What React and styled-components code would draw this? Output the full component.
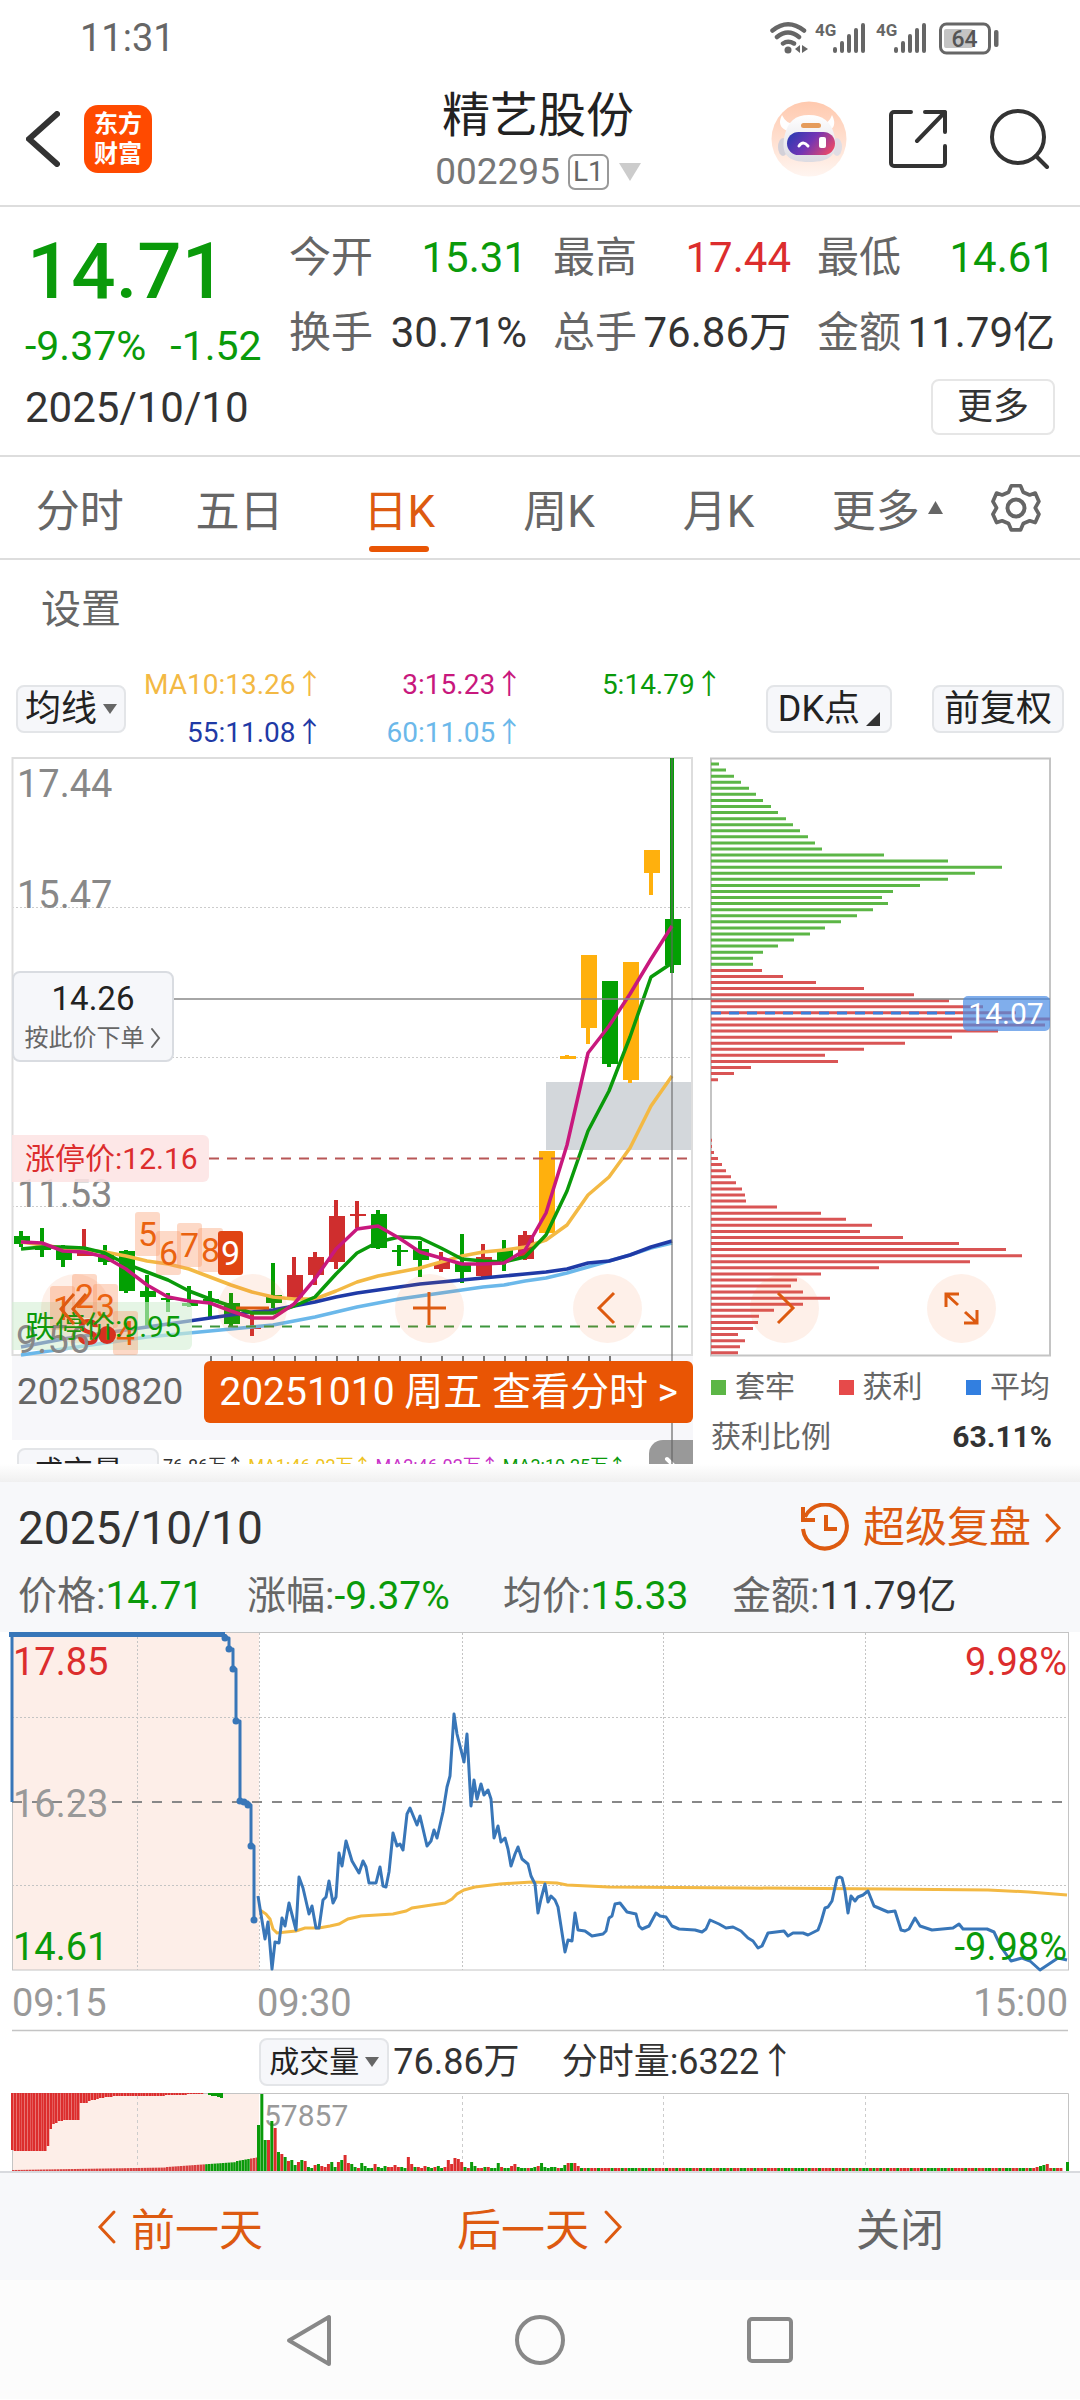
import React, { useState } from "react";

import styled, { createGlobalStyle } from "styled-components";

const GREEN = "#0a9a0a";
const RED = "#dc2d2d";
const ORANGE = "#dd5a10";
const AMBER = "#f3b944";
const MAGENTA = "#c8187d";
const BLUE = "#1f3aa6";
const SKY = "#6bb8ea";

const GlobalStyle = createGlobalStyle`
	* {
		box-sizing: border-box;
	}

	body {
		margin: 0;
		background: #fff;
		color: #333;
		font-family: Roboto, "Noto Sans CJK SC", sans-serif;
		font-size: 38px;
	}

	button {
		margin: 0;
		padding: 0;
		border: 0;
		background: none;
		color: inherit;
		font: inherit;
		cursor: pointer;
	}

	svg {
		display: block;
	}

	h1, h2, p, dl, dt, dd {
		margin: 0;
		font-weight: 400;
	}
`;

/* ---------- status bar ---------- */

const StatusBar = styled.div`
	display: flex;
	align-items: center;
	justify-content: space-between;
	height: 75px;
	padding: 0 80px;
	color: #666;
`;

const SignalBars = ({ x }) => (
	<g stroke="#666" strokeWidth="4" strokeLinecap="round">
		<path d={`M${x} 47v2M${x + 7} 41v8M${x + 14} 34v15M${x + 21} 28v21M${x + 28} 23v26`} />
	</g>
);

const StatusIcons = () => (
	<svg width="232" height="40" viewBox="768 16 232 40" fill="none" fontFamily="Roboto, sans-serif">
		<g stroke="#666" strokeWidth="4.5" strokeLinecap="round">
			<path d="M772.500 28.500Q788 16 804 28.500M777 35Q788 26 799 35M783 41.500Q788 38 794 41.500" />
		</g>
		<circle cx="788" cy="48" r="3.500" fill="#666" />
		<path d="M795 47l5-4v8zM802 43l6 4-6 4z" fill="#666" />
		<text x="815" y="34" fontSize="17" fontWeight="700" fill="#666">4G</text>
		<SignalBars x={835} />
		<text x="876" y="34" fontSize="17" fontWeight="700" fill="#666">4G</text>
		<SignalBars x={896} />
		<rect x="940.500" y="22" width="49" height="29" rx="6" stroke="#666" strokeWidth="3" />
		<rect x="944" y="27" width="29" height="19" rx="2" fill="#c4c4c4" />
		<rect x="994" y="28" width="4.500" height="17" rx="2" fill="#666" />
		<text x="964.500" y="45" textAnchor="middle" fontSize="23" fontWeight="500" fill="#555">64</text>
	</svg>
);

/* ---------- header ---------- */

const Header = styled.header`
	display: grid;
	grid-template-columns: 1fr auto 1fr;
	align-items: center;
	height: 132px;
	padding: 0 30px 0 26px;
	border-bottom: 2px solid #ddd;
`;

const HeaderSide = styled.div`
	display: flex;
	align-items: center;
	justify-content: ${p => (p.$end ? "flex-end" : "flex-start")};
	gap: ${p => (p.$end ? "42px" : "24px")};
	padding-bottom: 2px;
`;

const Logo = styled.div`
	width: 68px;
	height: 68px;
	padding-top: 4px;
	border-radius: 14px;
	background: #ff4a00;
	color: #fff;
	font-size: 24px;
	font-weight: 700;
	line-height: 30px;
	text-align: center;
`;

const Title = styled.h1`
	color: #222;
	font-size: 48px;
	line-height: 64px;
	text-align: center;
`;

const CodeRow = styled.div`
	display: flex;
	align-items: center;
	gap: 8px;
	color: #777;
	font-size: 37px;
	line-height: 48px;
`;

const Level = styled.span`
	margin-right: 2px;
	padding: 0 3px;
	border: 2px solid #999;
	border-radius: 7px;
	color: #666;
	font-size: 28px;
	line-height: 32px;
`;

const Triangle = styled.i`
	width: 0;
	height: 0;
	border: ${p => p.$size}px solid transparent;
	border-top: ${p => p.$size * 2 - 4}px solid ${p => p.$color};
	border-bottom: 0;
`;

const Robot = () => (
	<svg width="76" height="76" viewBox="0 0 76 76">
		<defs>
			<linearGradient id="halo" x1="0" y1="0" x2="0" y2="1">
				<stop offset="0" stopColor="#ffc9ae" />
				<stop offset="1" stopColor="#fff5f0" />
			</linearGradient>
			<linearGradient id="visor" x1="0" y1="0.2" x2="1" y2="0.6">
				<stop offset="0" stopColor="#2c3bb2" />
				<stop offset="0.5" stopColor="#7335b4" />
				<stop offset="1" stopColor="#e4486c" />
			</linearGradient>
			<linearGradient id="shell" x1="0" y1="0" x2="0" y2="1">
				<stop offset="0" stopColor="#fff" />
				<stop offset="1" stopColor="#dcdbe2" />
			</linearGradient>
		</defs>
		<circle cx="38" cy="38" r="37.500" fill="url(#halo)" />
		<ellipse cx="12" cy="46" rx="5" ry="9" fill="#d3d0d8" />
		<ellipse cx="66" cy="46" rx="5" ry="9" fill="#e0dde4" />
		<path d="M11 14q-6 12 6 16l7-7q-9 0-13-9zM61 14q6 12-4 16l-7-7q8 0 11-9z" fill="#fff" />
		<path d="M38 14c14 0 22 7 25 19 5 20-3 28-25 28s-29-8-24-28c3-12 10-19 24-19z" fill="url(#shell)" />
		<rect x="30" y="22" width="20" height="5" rx="2.500" fill="#e59c5c" />
		<rect x="16" y="31" width="48" height="23" rx="11.500" fill="url(#visor)" />
		<path d="M28 45q4-6 9 0" fill="none" stroke="#fff" strokeWidth="3" strokeLinecap="round" />
		<rect x="48" y="36" width="7" height="11" rx="2" fill="#fff" />
	</svg>
);

const Chevron = ({ dir = "right", w, h, stroke = 3 }) => (
	<svg width={w} height={h} viewBox={`0 0 ${w} ${h}`} fill="none" stroke="currentColor" strokeWidth={stroke} strokeLinecap="round">
		<path d={dir === "left" ? `M${w - 3} 3L3 ${h / 2}L${w - 3} ${h - 3}` : `M3 3L${w - 3} ${h / 2}L3 ${h - 3}`} />
	</svg>
);

/* ---------- quote summary ---------- */

const Quote = styled.section`
	display: grid;
	grid-template-columns: 264px 1fr;
	padding: 13px 25px 19px;
	border-bottom: 2px solid #ddd;
`;

const Latest = styled.div`
	padding-top: 10px;
`;

const BigPrice = styled.p`
	color: ${GREEN};
	font-size: 78px;
	font-weight: 500;
	line-height: 84px;
	padding-left: 2px;
`;

const Change = styled.p`
	display: flex;
	gap: 24px;
	color: ${GREEN};
	font-size: 41px;
	line-height: 64px;
`;

const Figures = styled.dl`
	display: grid;
	grid-template-columns: repeat(3, 1fr);
	align-content: start;
	column-gap: 26px;
`;

const Figure = styled.div`
	display: flex;
	justify-content: space-between;
	color: ${p => p.$color || "#333"};
	font-size: 42px;
	line-height: 75px;
	white-space: nowrap;

	& dt {
		color: #666;
	}
`;

const QuoteFoot = styled.div`
	grid-column: 1 / -1;
	display: flex;
	align-items: center;
	justify-content: space-between;
	height: 58px;
	color: #333;
	font-size: 42px;
`;

const MoreButton = styled.button`
	height: 56px;
	padding: 0 24px;
	border: 2px solid #e6e6e6;
	border-radius: 8px;
	font-size: 36px;
	line-height: 48px;
`;

/* ---------- period tabs ---------- */

const Tabs = styled.nav`
	display: flex;
	height: 103px;
	padding-right: 24px;
	border-bottom: 2px solid #ddd;
`;

const Tab = styled.button`
	position: relative;
	display: flex;
	flex: ${p => p.$grow || 160} 1 0;
	align-items: center;
	justify-content: center;
	gap: 8px;
	color: ${p => (p.$active ? ORANGE : "#666")};
	font-size: 44px;

	&::after {
		content: "";
		position: absolute;
		bottom: 6px;
		left: 50%;
		width: 60px;
		height: 6px;
		margin-left: -30px;
		border-radius: 3px;
		background: ${p => (p.$active ? "#e95504" : "transparent")};
	}
`;

const SettingsRow = styled.div`
	height: 100px;
	padding-left: 41px;
	color: #666;
	font-size: 40px;
	line-height: 100px;
`;

/* ---------- moving average row ---------- */

const AverageRow = styled.div`
	display: flex;
	align-items: center;
	height: 97px;
	padding: 0 16px;
`;

const Chip = styled.button`
	display: flex;
	flex-shrink: 0;
	align-items: center;
	gap: 6px;
	height: 48px;
	padding: 0 ${p => p.$pad || 10}px;
	border: 2px solid #e3e5e8;
	border-radius: 8px;
	background: #f6f7fa;
	color: #222;
	font-size: ${p => p.$size || 36}px;
	line-height: 42px;
	white-space: nowrap;
`;

const Averages = styled.div`
	display: grid;
	grid-template-columns: 198fr 200fr 200fr;
	flex: 598 1 0;
	font-size: 28px;
	line-height: 48px;
	text-align: right;
`;

const Average = styled.span`
	color: ${p => p.$color};
`;

const ChipGroup = styled.div`
	display: flex;
	flex: 342 1 0;
	justify-content: flex-end;
	gap: 40px;
`;

const Corner = styled.i`
	align-self: flex-end;
	width: 0;
	height: 0;
	margin-bottom: 5px;
	border-bottom: 14px solid #333;
	border-left: 14px solid transparent;
`;

/* ---------- daily candle chart ---------- */

// colour, high, open/close top, open/close bottom, low (chart units)
const candles = [
	["g", 1232, 1237, 1245, 1248], ["g", 1229, 1247, 1251, 1258], ["g", 1246, 1250, 1261, 1268],
	["r", 1230, 1252, 1257, 1257], ["g", 1246, 1255, 1263, 1266], ["g", 1251, 1252, 1292, 1294],
	["g", 1276, 1292, 1298, 1327], ["g", 1294, 1299, 1301, 1313], ["g", 1287, 1304, 1307, 1308],
	["g", 1292, 1300, 1303, 1319], ["g", 1294, 1304, 1325, 1328], ["r", 1313, 1328, 1330, 1337],
	["g", 1264, 1296, 1304, 1309], ["r", 1258, 1276, 1299, 1300], ["r", 1253, 1258, 1276, 1286],
	["r", 1201, 1217, 1263, 1270], ["r", 1202, 1215, 1217, 1229], ["g", 1211, 1215, 1249, 1250],
	["g", 1246, 1251, 1253, 1267], ["g", 1242, 1250, 1261, 1278], ["r", 1253, 1263, 1270, 1273],
	["g", 1235, 1265, 1273, 1284], ["r", 1245, 1258, 1277, 1278], ["g", 1241, 1251, 1261, 1272],
	["r", 1232, 1236, 1260, 1261], ["y", 1152, 1152, 1234, 1234], ["y", 1056, 1057, 1060, 1060],
	["y", 956, 956, 1029, 1045], ["g", 982, 982, 1065, 1068], ["y", 963, 963, 1081, 1084],
	["y", 851, 851, 874, 896], ["g", 759, 920, 966, 974]
];
const candleFill = { g: "#03a003", r: "#cf2e2e", y: "#ffb00d" };

const ma3 = [1243, 1244, 1252, 1253, 1258, 1270, 1286, 1298, 1302, 1304, 1312, 1319, 1319, 1305, 1280, 1250, 1230, 1227, 1239, 1253, 1259, 1265, 1265, 1264, 1251, 1214, 1146, 1054, 1027, 995, 960, 927];
const ma5 = [1250, 1248, 1248, 1249, 1254, 1265, 1273, 1281, 1292, 1300, 1307, 1314, 1314, 1307, 1298, 1275, 1254, 1243, 1238, 1239, 1249, 1260, 1262, 1263, 1258, 1236, 1192, 1132, 1092, 1038, 978, 964];
const ma10 = [1243, 1246, 1249, 1251, 1253, 1257, 1262, 1265, 1270, 1278, 1286, 1293, 1298, 1300, 1300, 1292, 1283, 1277, 1273, 1269, 1263, 1257, 1253, 1251, 1248, 1241, 1226, 1196, 1178, 1149, 1107, 1077];
const ma55 = [1348, 1344, 1340, 1337, 1334, 1331, 1328, 1325, 1322, 1319, 1316, 1313, 1311, 1307, 1303, 1298, 1294, 1291, 1288, 1285, 1283, 1281, 1279, 1277, 1275, 1273, 1270, 1264, 1262, 1256, 1248, 1242];
const ma60 = [1356, 1353, 1350, 1347, 1344, 1341, 1338, 1336, 1334, 1332, 1330, 1328, 1326, 1322, 1318, 1313, 1308, 1304, 1300, 1297, 1294, 1291, 1288, 1286, 1282, 1279, 1274, 1268, 1262, 1256, 1249, 1244];

const linePoints = values => values.map((y, i) => `${21 + i * 21},${y}`).join(" ");

// nine-turn counter marks: label, left, top
const turnMarks = [
	["1", 50, 1287], ["2", 72, 1275], ["3", 93, 1285], ["4", 113, 1312],
	["5", 135, 1213], ["6", 156, 1232], ["7", 177, 1224], ["8", 198, 1229], ["9", 218, 1232]
];

const ChartGrid = styled.section`
	position: relative;
	display: grid;
	grid-template-columns: 681fr 341fr;
	gap: 18px;
	padding: 0 28px 0 12px;
`;

const ChartColumn = styled.div`
	position: relative;
	min-width: 0;
`;

const ChartSvg = styled.svg`
	width: 100%;
	height: auto;
	overflow: visible;
`;

const PriceTag = styled.button`
	position: absolute;
	top: 214px;
	left: 0;
	width: 162px;
	height: 91px;
	border: 2px solid #d9dce1;
	border-radius: 8px;
	background: #f6f7fa;
	color: #222;
	font-size: 33px;
	line-height: 42px;
`;

const PriceTagHint = styled.span`
	display: flex;
	align-items: center;
	justify-content: center;
	gap: 4px;
	color: #666;
	font-size: 24px;
	line-height: 36px;
`;

const KLine = () => (
	<ChartSvg viewBox="12 758 681 604">
		<rect x="12" y="1357" width="681" height="6" fill="#f7f7fa" />
		<rect x="546" y="1083" width="146" height="68" fill="#d3d7db" />
		<g stroke="#ccc" strokeWidth="1" strokeDasharray="2 2">
			<path d="M12 908.500H692M12 1058.500H692M12 1207.500H692" />
		</g>
		<rect x="12.500" y="759" width="679.500" height="597" fill="none" stroke="#ddd" strokeWidth="2" />
		<path d={candles.slice(9, 29).map((c, i) => `M${211 + i * 21} 1357v5`).join("")} stroke="#777" strokeWidth="2" />
		<g fontSize="38" fill="#888">
			<text x="17" y="798">17.44</text>
			<text x="17" y="909">15.47</text>
			<text x="17" y="1208">11.53</text>
		</g>
		{candles.map(([kind, high, top, bottom, low], i) => (
			<g key={i} fill={candleFill[kind]}>
				<rect x={19 + i * 21} y={high} width="4" height={low - high} />
				<rect x={14 + i * 21} y={top} width="16" height={bottom - top} />
			</g>
		))}
		<g fill="none" strokeWidth="3.500" strokeLinejoin="round">
			<polyline points={linePoints(ma10)} stroke={AMBER} />
			<polyline points={linePoints(ma60)} stroke={SKY} />
			<polyline points={linePoints(ma55)} stroke={BLUE} />
			<polyline points={linePoints(ma5)} stroke={GREEN} />
			<polyline points={linePoints(ma3)} stroke={MAGENTA} />
		</g>
		<path d="M209 1159.500H690" stroke="#b85656" strokeWidth="2" strokeDasharray="10 8" />
		<path d="M192 1327.500H690" stroke="#3d963d" strokeWidth="2" strokeDasharray="10 8" />
		<path d="M12 1136H203a6 6 0 0 1 6 6V1177a6 6 0 0 1-6 6H12z" fill="#fde4e4" fillOpacity="0.9" />
		<text x="25" y="1170" fontSize="30" fill={RED}>涨停价:12.16</text>
		<path d="M12 1303H186a6 6 0 0 1 6 6V1345a6 6 0 0 1-6 6H12z" fill="#d3efd3" fillOpacity="0.6" />
		{turnMarks.map(([label, x, y]) => (
			<g key={label}>
				<rect x={x} y={y} width="25" height="44" rx="3" fill={label === "9" ? "#e04413" : "#fa9664"} fillOpacity={label === "9" ? 1 : 0.36} />
				<text x={x + 12.5} y={y + 34} textAnchor="middle" fontSize="34" fill={label === "9" ? "#fff" : "#ea620f"}>{label}</text>
			</g>
		))}
		<text x="77" y="1346" fontSize="36" fontWeight="700" fill="#d7301f">S</text>
		<circle cx="107" cy="1336" r="9" fill="#d7301f" />
		<text x="16" y="1354" fontSize="38" fill="#888">9.56</text>
		<text x="25" y="1338" fontSize="30" fill={GREEN}>跌停价:9.95</text>
		<path d="M672 759V1362" stroke="#666" strokeOpacity="0.55" strokeWidth="2" />
		<path d="M173 1000H693" stroke="#888" strokeOpacity="0.75" strokeWidth="2" />
	</ChartSvg>
);

const DateStrip = styled.div`
	display: flex;
	justify-content: space-between;
	height: 79px;
	padding-left: 5px;
	background: #f7f7fa;
	color: #666;
	font-size: 37px;
	line-height: 62px;
`;

const DateButton = styled.button`
	position: relative;
	z-index: 1;
	height: 62px;
	padding: 0 15px;
	border-radius: 6px;
	background: #e95504;
	color: #fff;
	font-size: 39px;
	line-height: 60px;
	white-space: nowrap;
`;

const BelowChart = styled.div`
	position: relative;

	&::after {
		content: "";
		position: absolute;
		top: 0;
		right: 20px;
		bottom: 0;
		width: 2px;
		background: rgba(102, 102, 102, 0.6);
	}
`;

const VolumeStrip = styled.div`
	display: flex;
	align-items: flex-start;
	gap: 4px;
	height: 24px;
	padding: 8px 0 0 5px;
	overflow: hidden;
	font-size: 18px;
	line-height: 36px;
	white-space: nowrap;
`;

const VolumeNote = styled.span`
	color: ${p => p.$color};
`;

const SideHandle = styled.button`
	display: flex;
	flex-shrink: 0;
	justify-content: center;
	width: 44px;
	height: 44px;
	margin: -8px 0 0 auto;
	padding-top: 16px;
	border-top-left-radius: 14px;
	background: #999;
	color: #fff;
`;

/* ---------- chip distribution ---------- */

const trapped = [8, 15, 23, 30, 38, 45, 52, 60, 67, 75, 82, 89, 97, 104, 111, 173, 237, 291, 264, 237, 209, 182, 171, 177, 162, 146, 130, 114, 99, 83, 67, 52, 42, 42];
const profit = [
	51, 72, 105, 153, 203, 238, 272, 305, 339, 334, 287, 241, 194, 153, 114, 127, 40, 23, 7,
	0, 0, 0, 0, 0, 0, 0, 0, 0, 1, 1, 3, 7, 11, 15, 20, 25, 31, 34, 35, 66, 110, 135, 161, 149,
	192, 248, 295, 311, 259, 168, 110, 86, 80, 92, 119, 92, 63, 48, 47, 42, 27, 34, 29, 27
];

const barRuns = (values, from) =>
	values.map((w, i) => (w ? `M711 ${765 + (i + from) * 6.07}h${w}` : "")).join("");

const Distribution = () => (
	<ChartSvg viewBox="711 758 341 599">
		<rect x="711" y="759.500" width="339" height="597" fill="none" stroke="#c4c4c4" strokeWidth="2" />
		<path d={barRuns(trapped, 0)} stroke="#5cb646" strokeWidth="3" />
		<path d={barRuns(profit, trapped.length)} stroke="#d95555" strokeWidth="3" />
		<path d="M711 1014H963" stroke="#3a7fdc" strokeWidth="3" strokeDasharray="10 8" />
		<path d="M692 1000H1050" stroke="#888" strokeOpacity="0.8" strokeWidth="2" />
		<rect x="963" y="997" width="87" height="35" rx="5" fill="#4a8be4" fillOpacity="0.7" />
		<text x="1006" y="1025" textAnchor="middle" fontSize="30" fill="#fff">14.07</text>
	</ChartSvg>
);

const Legend = styled.div`
	display: flex;
	justify-content: space-between;
	padding-right: 2px;
	color: #666;
	font-size: 30px;
	line-height: 62px;
`;

const LegendItem = styled.span`
	display: flex;
	align-items: center;
	gap: 9px;

	&::before {
		content: "";
		width: 15px;
		height: 15px;
		background: ${p => p.$color};
	}
`;

const Ratio = styled.div`
	display: flex;
	justify-content: space-between;
	color: #666;
	font-size: 30px;
	line-height: 38px;

	& strong {
		color: #333;
	}
`;

const ChartControls = styled.div`
	position: absolute;
	top: 517px;
	right: 84px;
	left: 41px;
	display: flex;
	justify-content: space-between;
`;

const RoundButton = styled.button`
	width: 69px;
	height: 69px;
	border-radius: 50%;
	background: rgba(250, 110, 40, 0.1);
	color: ${ORANGE};
`;

const controls = [
	["最左", "M33 20L20 35L33 50M45 20L32 35L45 50"],
	["缩小", "M18 34H51"],
	["放大", "M18 34H51M34 18V51"],
	["左移", "M41 19L26 34L41 49"],
	["右移", "M28 19L43 34L28 49"],
	["全屏", "M19 33V20H32M19 20L31 31M50 36V49H37M50 49L38 38"]
];

/* ---------- intraday panel ---------- */

const Shade = styled.div`
	height: 18px;
	background: linear-gradient(#fff, #f0f0f0);
`;

const PanelHead = styled.div`
	padding: 12px 18px 2px;
	background: #f7f8fa;
`;

const PanelTitle = styled.div`
	display: flex;
	align-items: center;
	justify-content: space-between;
	height: 68px;

	& h2 {
		font-size: 46px;
		line-height: 64px;
	}
`;

const ReplayLink = styled.a`
	display: flex;
	align-items: center;
	gap: 13px;
	color: ${ORANGE};
	font-size: 42px;
	line-height: 60px;
	text-decoration: none;
`;

const PanelFigures = styled.dl`
	display: grid;
	grid-template-columns: 229fr 256fr 229fr 330fr;
	font-size: 39px;
	line-height: 68px;
`;

const PanelFigure = styled.div`
	display: flex;
	color: ${p => p.$color || GREEN};

	& dt {
		color: #666;
	}
`;

const price = "258,1897 265,1940 268,1923 272,1970 275,1943 279,1944 282,1919 285,1927 289,1904 296,1931 299,1878 303,1889 309,1915 312,1907 316,1929 319,1929 323,1901 326,1898 329,1882 333,1904 336,1898 339,1854 342,1867 346,1842 352,1862 359,1874 363,1862 366,1868 369,1884 376,1884 380,1868 383,1887 386,1888 389,1873 393,1834 397,1847 400,1845 403,1851 407,1815 410,1809 417,1826 420,1817 427,1847 431,1842 434,1831 437,1839 443,1813 447,1788 450,1777 454,1715 457,1735 464,1763 467,1735 471,1807 474,1781 477,1800 481,1785 484,1796 488,1791 491,1800 494,1839 498,1827 501,1843 505,1839 508,1850 511,1867 515,1855 518,1848 522,1860 528,1865 531,1877 535,1885 538,1914 541,1900 545,1885 548,1903 551,1897 555,1901 558,1908 565,1953 568,1941 572,1942 575,1914 578,1931 585,1932 592,1937 603,1935 606,1932 609,1919 612,1917 615,1905 620,1904 627,1913 636,1915 639,1927 642,1930 649,1927 656,1914 660,1917 666,1918 672,1927 679,1930 695,1931 702,1933 706,1930 710,1921 719,1925 726,1929 733,1928 741,1932 748,1939 753,1942 758,1949 762,1947 768,1934 784,1932 788,1937 793,1934 803,1934 808,1936 818,1931 821,1923 825,1909 828,1908 832,1902 837,1879 840,1878 842,1879 845,1892 848,1914 851,1897 855,1902 858,1898 863,1896 868,1892 874,1907 888,1913 895,1912 901,1931 905,1932 909,1930 915,1919 920,1927 932,1931 953,1929 959,1925 963,1930 987,1930 994,1933 1001,1948 1011,1962 1022,1959 1030,1962 1040,1971 1049,1965 1058,1959 1067,1961";
const average = "260,1911 266,1915 270,1920 273,1930 277,1934 286,1933 296,1932 305,1929 319,1929 330,1927 339,1925 348,1920 361,1917 393,1915 406,1912 412,1909 425,1907 445,1904 452,1900 457,1895 464,1891 475,1888 500,1885 532,1883 557,1884 567,1886 609,1888 746,1889 884,1890 988,1891 1029,1893 1067,1896";
const auction = [[225, 1639], [229, 1650], [233, 1670], [236, 1722], [240, 1802], [244, 1803], [248, 1806], [251, 1847], [254, 1921]];

const Intraday = () => (
	<ChartSvg viewBox="0 1633 1080 400">
		<rect x="12" y="1634" width="247" height="337" fill="#fdeee8" />
		<g stroke="#c4c4c4" strokeWidth="1" strokeDasharray="2 2">
			<path d="M12 1718.500H1068M12 1886.500H1068" />
			<path d="M137.500 1634V1971M259.500 1634V1971M462.500 1634V1971M663.500 1634V1971M865.500 1634V1971" />
		</g>
		<rect x="12.500" y="1633.500" width="1056" height="337.500" fill="none" stroke="#c4c4c4" />
		<path d="M12 1803H1068" stroke="#888" strokeWidth="2" strokeDasharray="10 10" />
		<g fontSize="38">
			<text x="13" y="1676" fill={RED}>17.85</text>
			<text x="13" y="1818" fill="#999">16.23</text>
			<text x="13" y="1961" fill={GREEN}>14.61</text>
			<text x="1067" y="1676" textAnchor="end" fill={RED}>9.98%</text>
		</g>
		<polyline points={average} fill="none" stroke={AMBER} strokeWidth="3" />
		<g fill="none" stroke="#3876b8" strokeWidth="3" strokeLinejoin="round">
			<path d="M12 1803V1635" />
			<path d="M9 1635.500H225" strokeWidth="5" />
			<path d={`M225 1635${auction.map(([x, y]) => `H${x}V${y}`).join("")}`} />
			<polyline points={price} />
		</g>
		{auction.map(([x, y]) => <circle key={x} cx={x} cy={y} r="3.500" fill="#3876b8" />)}
		<text x="1067" y="1961" textAnchor="end" fontSize="38" fill={GREEN}>-9.98%</text>
		<g fontSize="38" fill="#999">
			<text x="12" y="2017">09:15</text>
			<text x="257" y="2017">09:30</text>
			<text x="1068" y="2017" textAnchor="end">15:00</text>
		</g>
		<path d="M12 2031.500H1068" stroke="#c4c4c4" strokeWidth="1.500" />
	</ChartSvg>
);

const VolumeHead = styled.div`
	display: flex;
	align-items: center;
	gap: 4px;
	height: 60px;
	padding-left: 24%;
	font-size: 36px;
	line-height: 54px;
`;

const VolumeNow = styled.span`
	margin-left: 38px;
`;

const preTop = [57, 58, 58, 58, 58, 58, 58, 58, 58, 58, 58, 58, 58, 53, 36, 31, 30, 28, 28, 27, 27, 27, 27, 27, 27, 10, 10, 10, 8, 7, 7, 6, 5, 5, 4, 4, 4, 3, 3, 3, 3, 3, 3, 3, 3, 3, 3, 3, 3, 3, 3, 3, 3, 3, 3, 3, 2, 2, 2, 2, 2, 2, 2, 2, 1, 1, 1, 1, 1, 1];
const opening = [46, 77, 31, 31, 50, 43, 19, 17, 14, 10, 11, 6, 9, 11, 10, 4, 3, 6, 7, 5, 4, 7, 9, 4, 9, 11, 16, 8, 7, 4, 3, 8, 5, 3, 3, 7, 4, 3, 5, 4, 4, 6, 4, 4, 3, 14, 7, 4, 4, 3, 5, 4, 3, 4, 5, 3, 4, 11, 7, 13, 12, 9, 4, 3, 9, 5, 3, 3, 4, 4, 3, 3, 8, 4, 3, 3, 5, 7, 4, 3, 3, 3, 3, 4, 5, 8, 4, 3, 4, 4, 3, 3, 6, 8, 8, 8, 5];
const openingRed = "0001010101001010010111001011001000010001111001101110010011111101001101000100110001001000001001011";

const VolumeChart = () => (
	<ChartSvg viewBox="0 2093 1080 79">
		<rect x="12" y="2094" width="247" height="78" fill="#fdeee8" />
		<path d="M137.500 2097V2172M462.500 2097V2172M663.500 2097V2172M865.500 2097V2172" stroke="#ccc" strokeDasharray="3 3" />
		<path d="M12.500 2172V2094.500H1068.500V2172" fill="none" stroke="#c4c4c4" strokeWidth="1" />
		{preTop.map((h, i) => <rect key={i} x={11 + i * 2.75} y="2094" width="2.500" height={h} fill="#dc2d2d" />)}
		{[2, 3, 3, 4, 5].map((h, i) => <rect key={i} x={208 + i * 3} y="2094" width="3" height={h} fill={GREEN} />)}
		{Array.from({ length: 88 }, (_, i) => {
			const h = i < 55 ? 1 + i / 22 : i < 80 ? 4 + (i - 55) / 5 : 10 + (i - 80) / 2;
			return <rect key={i} x={12 + i * 2.8} y={2172 - h} width="2.500" height={h} fill={i > 68 && i < 85 ? GREEN : "#d84040"} />;
		})}
		<text x="264" y="2127" fontSize="30" fill="#999">57857</text>
		{opening.map((h, i) => (
			<rect key={i} x={257 + i * 3.33} y={2172 - h} width="3" height={h} fill={openingRed[i] === "1" ? RED : GREEN} />
		))}
		{Array.from({ length: 142 }, (_, i) => {
			const h = i > 133 && i < 138 ? i - 130 : 3;
			return <rect key={i} x={580 + i * 3.4} y={2172 - h} width="3" height={h} fill={(i * 7 + (i >> 3) * 5) % 11 < 5 ? GREEN : RED} />;
		})}
		<rect x="1066" y="2163" width="3" height="9" fill={GREEN} />
	</ChartSvg>
);

/* ---------- bottom bars ---------- */

const DayBar = styled.footer`
	display: flex;
	height: 109px;
	border-top: 2px solid #d8dade;
	background: #f7f8fa;
`;

const DayButton = styled.button`
	display: flex;
	flex: 1;
	align-items: center;
	justify-content: center;
	gap: 14px;
	color: ${p => (p.$muted ? "#666" : ORANGE)};
	font-size: 44px;
`;

const SystemNav = styled.nav`
	display: flex;
	align-items: center;
	justify-content: center;
	gap: 170px;
	height: 119px;
	background: #fcfcfc;

	& button {
		width: 60px;
		height: 60px;
	}
`;

const periods = ["分时", "五日", "日K", "周K", "月K"];

export default function App() {
	const [period, setPeriod] = useState("日K");

	return (
		<>
			<GlobalStyle />
			<StatusBar>
				<span>11:31</span>
				<StatusIcons />
			</StatusBar>

			<Header>
				<HeaderSide>
					<button aria-label="返回"><Chevron dir="left" w={34} h={56} stroke={6} /></button>
					<Logo>东方<br />财富</Logo>
				</HeaderSide>
				<div>
					<Title>精艺股份</Title>
					<CodeRow>
						002295
						<Level>L1</Level>
						<Triangle $size={11} $color="#ccc" />
					</CodeRow>
				</div>
				<HeaderSide $end>
					<button aria-label="智能助手"><Robot /></button>
					<button aria-label="分享">
						<svg width="58" height="58" viewBox="0 0 58 58" fill="none" stroke="#333" strokeWidth="4" strokeLinecap="round" strokeLinejoin="round">
							<path d="M22 2H5a3 3 0 0 0-3 3V53a3 3 0 0 0 3 3H53a3 3 0 0 0 3-3V36M36 2H56V22M56 2L28 31" />
						</svg>
					</button>
					<button aria-label="搜索">
						<svg width="61" height="60" viewBox="0 0 61 60" fill="none" stroke="#333" strokeWidth="4" strokeLinecap="round">
							<circle cx="29" cy="28" r="26" />
							<path d="M47 47L58 58" />
						</svg>
					</button>
				</HeaderSide>
			</Header>

			<Quote>
				<Latest>
					<BigPrice>14.71</BigPrice>
					<Change><span>-9.37%</span><span>-1.52</span></Change>
				</Latest>
				<Figures>
					<Figure $color={GREEN}><dt>今开</dt><dd>15.31</dd></Figure>
					<Figure $color={RED}><dt>最高</dt><dd>17.44</dd></Figure>
					<Figure $color={GREEN}><dt>最低</dt><dd>14.61</dd></Figure>
					<Figure><dt>换手</dt><dd>30.71%</dd></Figure>
					<Figure><dt>总手</dt><dd>76.86万</dd></Figure>
					<Figure><dt>金额</dt><dd>11.79亿</dd></Figure>
				</Figures>
				<QuoteFoot>
					2025/10/10
					<MoreButton>更多</MoreButton>
				</QuoteFoot>
			</Quote>

			<Tabs>
				{periods.map(name => (
					<Tab key={name} $active={name === period} onClick={() => setPeriod(name)}>{name}</Tab>
				))}
				<Tab $grow={178}>
					更多
					<svg width="15" height="13" viewBox="0 0 15 13"><path d="M7.500 0L15 13H0z" fill="#666" /></svg>
				</Tab>
				<Tab $grow={80} aria-label="图表设置">
					<svg width="52" height="54" viewBox="0 0 52 54" fill="none" stroke="#666" strokeWidth="4" strokeLinejoin="round">
						<path d="M21 3h10l3 7 7 3 6-2 4 9-4 7 4 7-4 9-6-2-7 3-3 7H21l-3-7-7-3-6 2-4-9 4-7-4-7 4-9 6 2 7-3z" transform="translate(2 2) scale(0.920)" />
						<circle cx="26" cy="27" r="8.500" />
					</svg>
				</Tab>
			</Tabs>

			<SettingsRow><button>设置</button></SettingsRow>

			<AverageRow>
				<Chip $pad={7}>均线<Triangle $size={7} $color="#666" /></Chip>
				<Averages>
					<Average $color={AMBER}>MA10:13.26↑</Average>
					<Average $color={MAGENTA}>3:15.23↑</Average>
					<Average $color={GREEN}>5:14.79↑</Average>
					<Average $color={BLUE}>55:11.08↑</Average>
					<Average $color={SKY}>60:11.05↑</Average>
				</Averages>
				<ChipGroup>
					<Chip>DK点<Corner /></Chip>
					<Chip>前复权</Chip>
				</ChipGroup>
			</AverageRow>

			<ChartGrid>
				<ChartColumn>
					<KLine />
					<PriceTag>
						14.26
						<PriceTagHint>按此价下单<Chevron w={13} h={24} stroke={2} /></PriceTagHint>
					</PriceTag>
					<BelowChart>
						<DateStrip>
							20250820
							<DateButton>20251010 周五 查看分时 &gt;</DateButton>
						</DateStrip>
						<VolumeStrip>
							<Chip $size={30} $pad={14}>成交量<Triangle $size={7} $color="#666" /></Chip>
							<VolumeNote $color="#333">76.86万↑</VolumeNote>
							<VolumeNote $color="#eec321">MA1:46.02万↑</VolumeNote>
							<VolumeNote $color="#c832c8">MA2:46.02万↑</VolumeNote>
							<VolumeNote $color={GREEN}>MA3:10.25万↑</VolumeNote>
							<SideHandle aria-label="展开"><Chevron w={14} h={22} stroke={4} /></SideHandle>
						</VolumeStrip>
					</BelowChart>
				</ChartColumn>
				<ChartColumn>
					<Distribution />
					<Legend>
						<LegendItem $color="#5cb646">套牢</LegendItem>
						<LegendItem $color="#e64a4a">获利</LegendItem>
						<LegendItem $color="#327fe0">平均</LegendItem>
					</Legend>
					<Ratio>获利比例<strong>63.11%</strong></Ratio>
				</ChartColumn>
				<ChartControls>
					{controls.map(([label, d]) => (
						<RoundButton key={label} aria-label={label}>
							<svg width="69" height="69" viewBox="0 0 69 69" fill="none" stroke="currentColor" strokeWidth="3"><path d={d} /></svg>
						</RoundButton>
					))}
				</ChartControls>
			</ChartGrid>

			<Shade />

			<PanelHead>
				<PanelTitle>
					<h2>2025/10/10</h2>
					<ReplayLink href="#replay">
						<svg width="50" height="50" viewBox="0 0 50 50" fill="none" stroke="currentColor" strokeWidth="4">
							<path d="M5 14A22 22 0 1 1 3 26M3 4V17H15M26 12V26H37" />
						</svg>
						超级复盘
						<Chevron w={18} h={32} stroke={3} />
					</ReplayLink>
				</PanelTitle>
				<PanelFigures>
					<PanelFigure><dt>价格:</dt><dd>14.71</dd></PanelFigure>
					<PanelFigure><dt>涨幅:</dt><dd>-9.37%</dd></PanelFigure>
					<PanelFigure><dt>均价:</dt><dd>15.33</dd></PanelFigure>
					<PanelFigure $color="#333"><dt>金额:</dt><dd>11.79亿</dd></PanelFigure>
				</PanelFigures>
			</PanelHead>

			<Intraday />
			<VolumeHead>
				<Chip $size={30} $pad={8}>成交量<Triangle $size={7} $color="#666" /></Chip>
				<span>76.86万</span>
				<VolumeNow>分时量:6322↑</VolumeNow>
			</VolumeHead>
			<VolumeChart />

			<DayBar>
				<DayButton><Chevron dir="left" w={20} h={36} />前一天</DayButton>
				<DayButton>后一天<Chevron w={20} h={36} /></DayButton>
				<DayButton $muted>关闭</DayButton>
			</DayBar>

			<SystemNav>
				<button aria-label="系统返回">
					<svg width="60" height="60" viewBox="0 0 60 60" fill="none" stroke="#888" strokeWidth="4" strokeLinejoin="round"><path d="M49 7V54L9 30.500z" /></svg>
				</button>
				<button aria-label="主屏幕">
					<svg width="60" height="60" viewBox="0 0 60 60" fill="none" stroke="#888" strokeWidth="4"><circle cx="30" cy="30" r="23" /></svg>
				</button>
				<button aria-label="最近任务">
					<svg width="60" height="60" viewBox="0 0 60 60" fill="none" stroke="#888" strokeWidth="4"><rect x="9" y="9" width="42" height="42" rx="3" /></svg>
				</button>
			</SystemNav>
		</>
	);
}
